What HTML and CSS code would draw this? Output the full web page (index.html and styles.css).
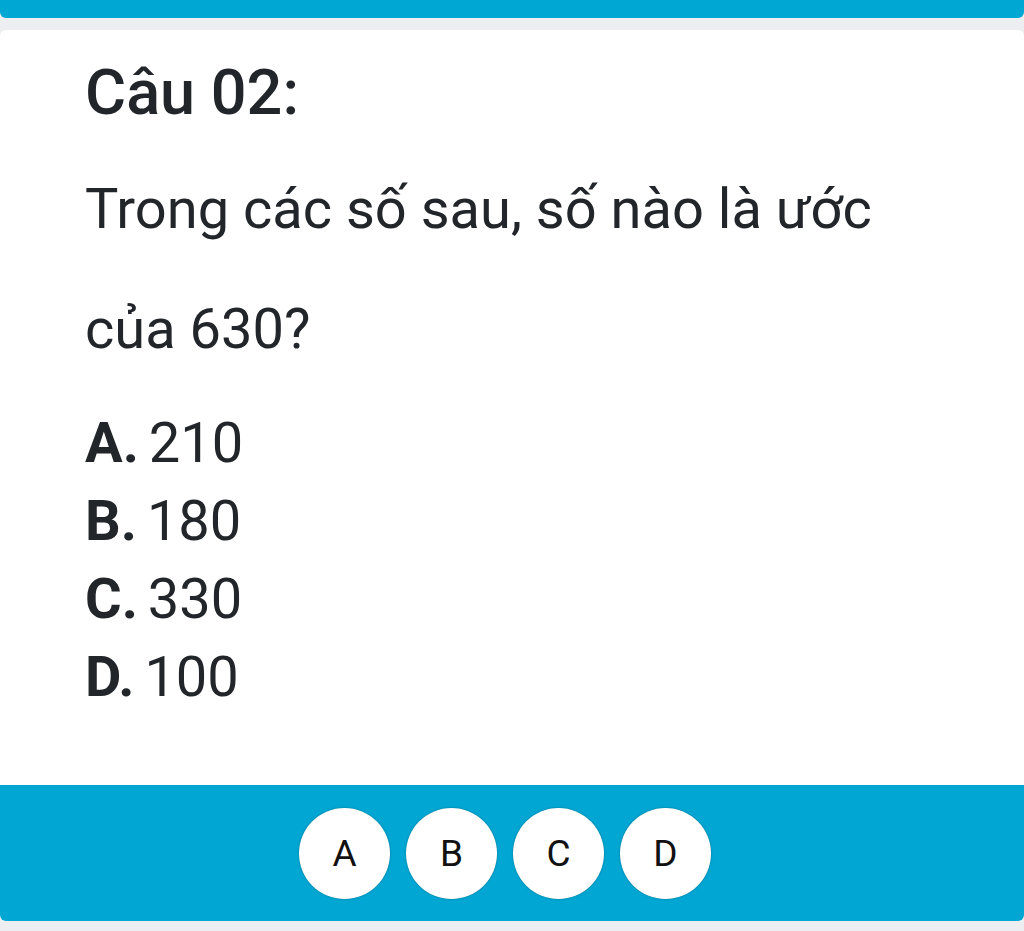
FILE: index.html
```html
<!DOCTYPE html>
<html lang="vi">
<head>
<meta charset="utf-8">
<link rel="stylesheet" href="styles.css">
</head>
<body>
<div class="topbar"></div>
<div class="card">
  <div class="card-body">
    <h2 class="title">Câu 02:</h2>
    <p class="question">Trong các số sau, số nào là ước<br>của 630?</p>
    <ul class="options">
      <li><b>A.</b> 210</li>
      <li><b>B.</b> 180</li>
      <li><b>C.</b> 330</li>
      <li><b>D.</b> 100</li>
    </ul>
  </div>
  <div class="footer">
    <div class="answers">
      <span class="bubble">A</span>
      <span class="bubble">B</span>
      <span class="bubble">C</span>
      <span class="bubble">D</span>
    </div>
  </div>
</div>
</body>
</html>
```

FILE: styles.css
```css
html, body {
  margin: 0;
  padding: 0;
}
body {
  background: #eceef2;
  font-family: Roboto, "Noto Sans", sans-serif;
  color: #222529;
  height: 931px;
  overflow: hidden;
}
.topbar {
  height: 18px;
  background: #01a7d3;
  border-radius: 0 0 6px 6px;
}
.card {
  margin-top: 12px;
  background: #ffffff;
  border-radius: 6px;
  overflow: hidden;
}
.card-body {
  padding: 0 0 0 85px;
  height: 755px;
  box-sizing: border-box;
}
.title {
  margin: 0;
  padding-top: 23px;
  font-size: 63px;
  font-weight: 500;
  line-height: 80px;
}
.question {
  margin: 16px 0 0;
  font-size: 56px;
  font-weight: 400;
  line-height: 120px;
}
.options {
  list-style: none;
  margin: 15px 0 0;
  padding: 0;
  font-size: 56px;
  line-height: 78px;
}
.options b {
  font-weight: 700;
  margin-right: -4px;
}
.footer {
  height: 136px;
  background: #02a6d2;
  display: flex;
  align-items: center;
  justify-content: center;
  padding-right: 14px;
}
.answers {
  display: flex;
  gap: 16px;
}
.bubble {
  width: 91px;
  height: 91px;
  border-radius: 50%;
  background: #ffffff;
  box-shadow: 0 0 2px rgba(0, 0, 0, 0.35);
  display: flex;
  align-items: center;
  justify-content: center;
  font-size: 37px;
  color: #111;
  font-weight: 400;
}
```
